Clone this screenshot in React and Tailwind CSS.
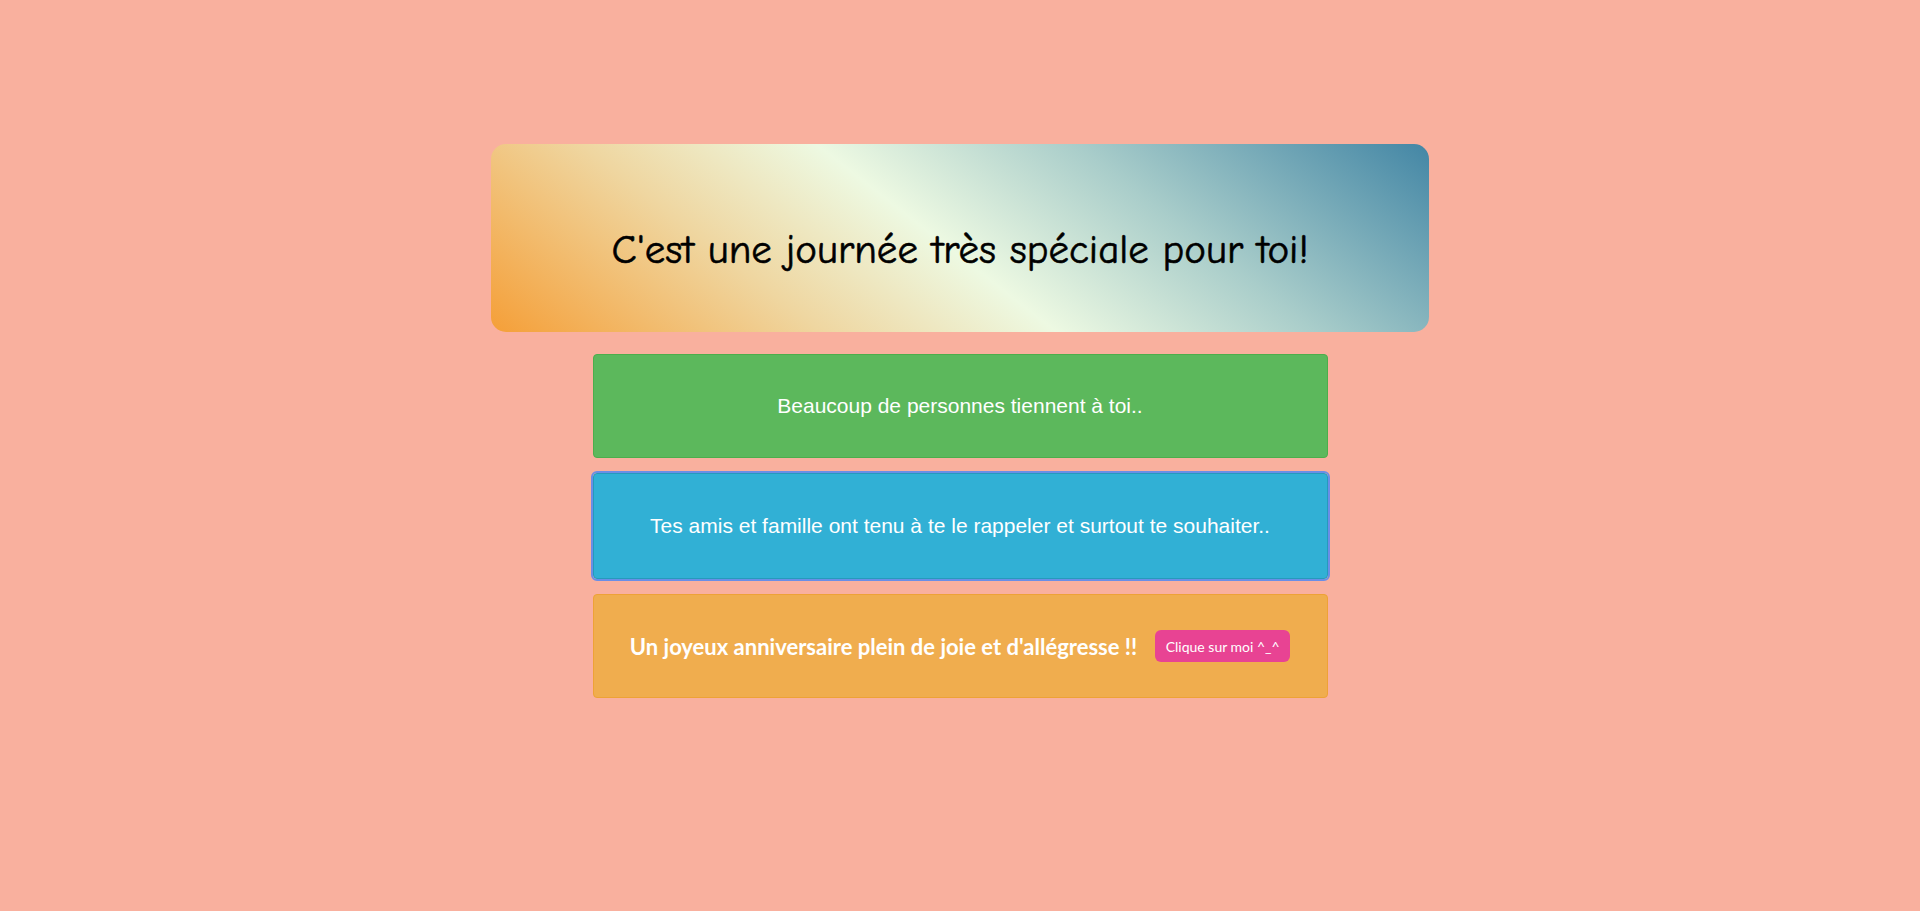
export default function App() {
  const lettre = "[font-family:'Gill_Sans_MT','Gill_Sans',Lato,sans-serif]";

  return (
    <div className="min-h-[911px] w-full bg-[#f9b09e] pt-[144px]">
      <div className="mx-auto flex h-[188px] w-[938px] items-center justify-center rounded-[15px] bg-[linear-gradient(38deg,#f59f38_0%,#efd6a0_28%,#edf9e2_48%,#a9cdca_70%,#4386a5_100%)] pt-[22px]">
        <h1 className="text-[41px] leading-none text-black [font-family:'Comic_Sans_MS','Comic_Neue','Open_Sans',cursive] [-webkit-text-stroke:0.6px_black]">
          C'est une journée très spéciale pour toi!
        </h1>
      </div>

      <div className="mx-auto mt-[22px] flex w-[735px] flex-col gap-[15px]">
        <div className="flex h-[104px] items-center justify-center rounded-[4px] border border-[#4cae4c] bg-[#5cb85c] text-[21px] text-white [font-family:'Liberation_Sans',Arial,sans-serif]">
          Beaucoup de personnes tiennent à toi..
        </div>

        <div className="flex h-[106px] items-center justify-center rounded-[4px] border border-[#269abc] bg-[#31b0d5] text-[21px] text-white outline outline-2 outline-[#6a8ee6] [font-family:'Liberation_Sans',Arial,sans-serif]">
          Tes amis et famille ont tenu à te le rappeler et surtout te souhaiter..
        </div>

        <div className={`flex h-[104px] items-center justify-center gap-[18px] rounded-[4px] border border-[#eea236] bg-[#f0ad4e] text-white ${lettre}`}>
          <span className="text-[22px] font-bold">
            Un joyeux anniversaire plein de joie et d'allégresse !!
          </span>
          <button className="flex h-[32px] w-[135px] items-center justify-center rounded-[6px] bg-[#e84393] text-[14px] text-white">
            Clique sur moi ^_^
          </button>
        </div>
      </div>
    </div>
  );
}
